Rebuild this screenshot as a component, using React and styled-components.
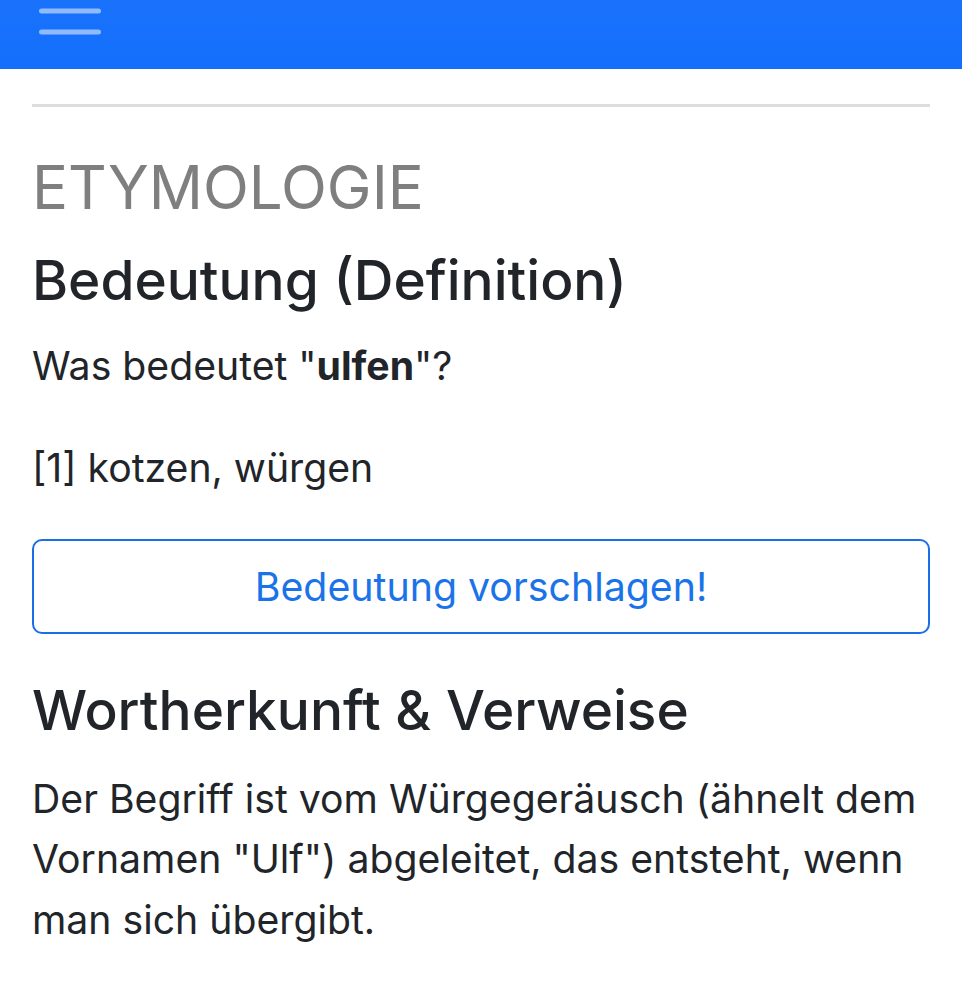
import React from "react";
import styled, { createGlobalStyle } from "styled-components";

const GlobalStyle = createGlobalStyle`
  body {
    margin: 0;
    background: #ffffff;
    font-family: Inter, "Noto Sans", "Liberation Sans", sans-serif;
    color: #212529;
  }
`;

const Navbar = styled.header`
  height: 69px;
  background: linear-gradient(180deg, #1a72fb 0%, #136ffc 100%);
  display: flex;
  align-items: flex-start;
  padding: 0 39px;
`;

const Toggler = styled.button`
  border: 0;
  padding: 0;
  background: none;
  display: block;
  line-height: 0;
`;

const Main = styled.main`
  padding: 35px 32px 0;
`;

const Rule = styled.hr`
  margin: 0;
  border: 0;
  border-top: 3px solid #dedede;
`;

const Kicker = styled.h2`
  margin: 44px 0 0;
  font-size: 60px;
  font-weight: 400;
  line-height: 1.2;
  color: #7f7f7f;
`;

const Heading = styled.h1`
  margin: ${(p) => p.$top}px 0 0;
  font-size: 55px;
  font-weight: 500;
  line-height: 1.2;
  color: #212529;
`;

const Text = styled.p`
  margin: ${(p) => p.$top}px 0 0;
  font-size: 39.2px;
  line-height: 1.55;
  color: #212529;

  strong {
    font-weight: 700;
  }
`;

const OutlineButton = styled.button`
  display: block;
  box-sizing: border-box;
  width: 100%;
  margin-top: 40px;
  height: 95px;
  border: 2px solid #1a6ee8;
  border-radius: 10px;
  background: #ffffff;
  color: #1a73e8;
  font-family: inherit;
  font-size: 39.3px;
  font-weight: 400;
`;

const MenuIcon = () => (
  <svg width="62" height="40" viewBox="0 0 62 40">
    <g stroke="#8fbbfd" strokeWidth="5" strokeLinecap="round">
      <line x1="2.5" y1="11" x2="59.5" y2="11" />
      <line x1="2.5" y1="32" x2="59.5" y2="32" />
    </g>
  </svg>
);

export default function App() {
  return (
    <>
      <GlobalStyle />
      <Navbar>
        <Toggler aria-label="Menü">
          <MenuIcon />
        </Toggler>
      </Navbar>
      <Main>
        <Rule />
        <Kicker>ETYMOLOGIE</Kicker>
        <Heading $top={24}>Bedeutung (Definition)</Heading>
        <Text $top={23}>
          Was bedeutet "<strong>ulfen</strong>"?
        </Text>
        <Text $top={41}>[1] kotzen, würgen</Text>
        <OutlineButton>Bedeutung vorschlagen!</OutlineButton>
        <Heading $top={43}>Wortherkunft &amp; Verweise</Heading>
        <Text $top={26}>
          Der Begriff ist vom Würgegeräusch (ähnelt dem Vornamen "Ulf")
          abgeleitet, das entsteht, wenn man sich übergibt.
        </Text>
      </Main>
    </>
  );
}
